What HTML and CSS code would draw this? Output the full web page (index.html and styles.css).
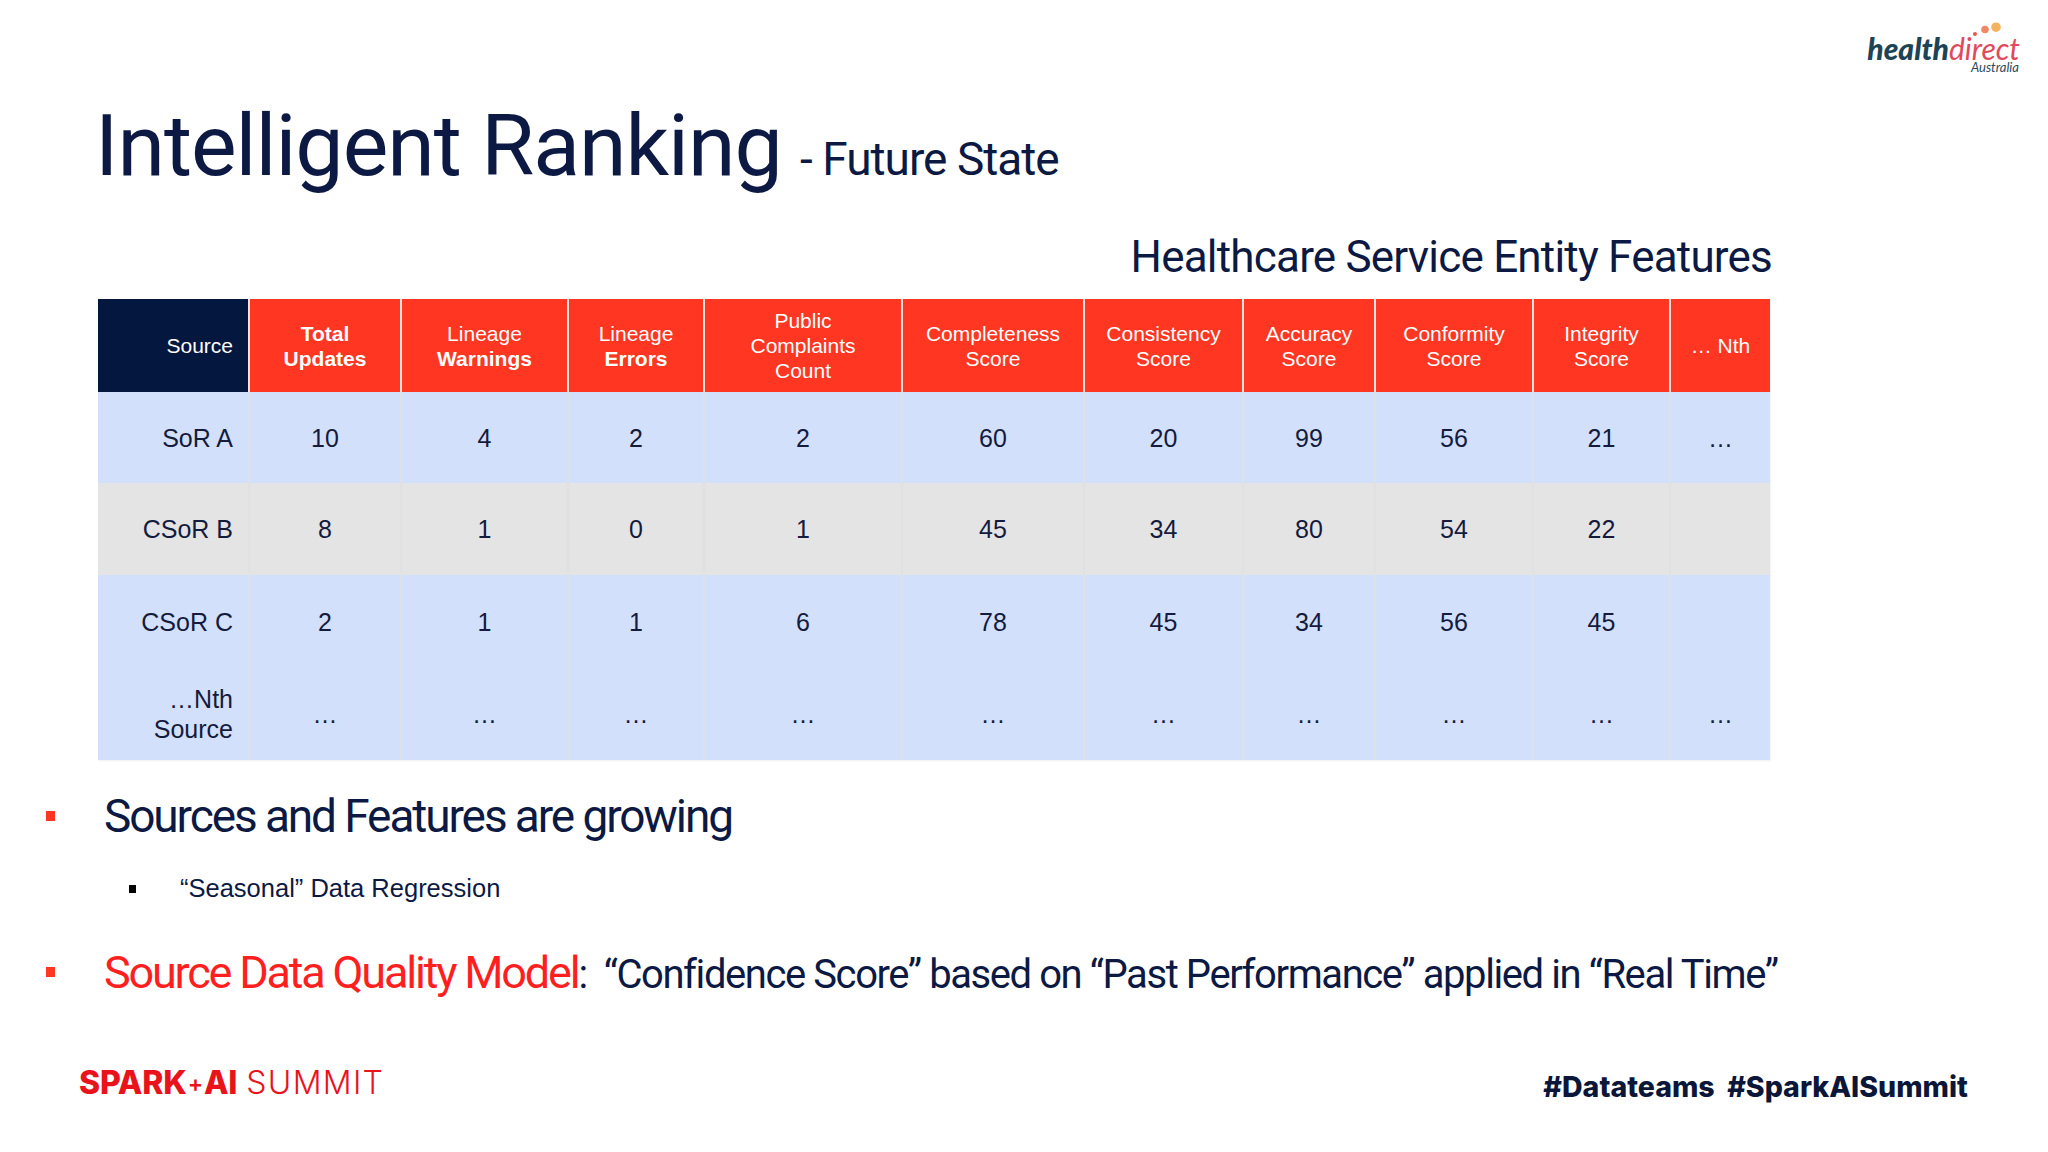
FILE: index.html
```html
<!DOCTYPE html>
<html lang="en">
<head>
<meta charset="utf-8">
<title>Intelligent Ranking - Future State</title>
<link rel="stylesheet" href="styles.css">
</head>
<body>
<div class="slide">
  <header class="top">
    <h1 class="title">Intelligent Ranking <span class="title-sub">- Future State</span></h1>
    <div class="hd-logo">
      <svg class="hd-dots" width="52" height="15" viewBox="0 0 52 15">
        <circle cx="7" cy="12" r="2" fill="#e4584a"/>
        <circle cx="17" cy="7.5" r="3.8" fill="#f08a66"/>
        <circle cx="28" cy="5.2" r="4.8" fill="#f3b35e"/>
      </svg>
      <div class="hd-word"><span class="hd-health">health</span><span class="hd-direct">direct</span></div>
      <div class="hd-aus">Australia</div>
    </div>
  </header>

  <div class="subtitle">Healthcare Service Entity Features</div>

  <div class="tbl">
    <div class="th th-src"><span>Source</span></div>
    <div class="th"><span><b>Total<br>Updates</b></span></div>
    <div class="th"><span>Lineage<br><b>Warnings</b></span></div>
    <div class="th"><span>Lineage<br><b>Errors</b></span></div>
    <div class="th"><span>Public<br>Complaints<br>Count</span></div>
    <div class="th"><span>Completeness<br>Score</span></div>
    <div class="th"><span>Consistency<br>Score</span></div>
    <div class="th"><span>Accuracy<br>Score</span></div>
    <div class="th"><span>Conformity<br>Score</span></div>
    <div class="th"><span>Integrity<br>Score</span></div>
    <div class="th"><span>… Nth</span></div>

    <div class="td td-src blue"><span>SoR A</span></div>
    <div class="td blue"><span>10</span></div>
    <div class="td blue"><span>4</span></div>
    <div class="td blue"><span>2</span></div>
    <div class="td blue"><span>2</span></div>
    <div class="td blue"><span>60</span></div>
    <div class="td blue"><span>20</span></div>
    <div class="td blue"><span>99</span></div>
    <div class="td blue"><span>56</span></div>
    <div class="td blue"><span>21</span></div>
    <div class="td blue"><span>…</span></div>

    <div class="td td-src grey"><span>CSoR B</span></div>
    <div class="td grey"><span>8</span></div>
    <div class="td grey"><span>1</span></div>
    <div class="td grey"><span>0</span></div>
    <div class="td grey"><span>1</span></div>
    <div class="td grey"><span>45</span></div>
    <div class="td grey"><span>34</span></div>
    <div class="td grey"><span>80</span></div>
    <div class="td grey"><span>54</span></div>
    <div class="td grey"><span>22</span></div>
    <div class="td grey"></div>

    <div class="td td-src blue"><span>CSoR C</span></div>
    <div class="td blue"><span>2</span></div>
    <div class="td blue"><span>1</span></div>
    <div class="td blue"><span>1</span></div>
    <div class="td blue"><span>6</span></div>
    <div class="td blue"><span>78</span></div>
    <div class="td blue"><span>45</span></div>
    <div class="td blue"><span>34</span></div>
    <div class="td blue"><span>56</span></div>
    <div class="td blue"><span>45</span></div>
    <div class="td blue"></div>

    <div class="td td-src blue"><span>…Nth<br>Source</span></div>
    <div class="td blue"><span>…</span></div>
    <div class="td blue"><span>…</span></div>
    <div class="td blue"><span>…</span></div>
    <div class="td blue"><span>…</span></div>
    <div class="td blue"><span>…</span></div>
    <div class="td blue"><span>…</span></div>
    <div class="td blue"><span>…</span></div>
    <div class="td blue"><span>…</span></div>
    <div class="td blue"><span>…</span></div>
    <div class="td blue"><span>…</span></div>
  </div>

  <ul class="bullets">
    <li class="b1"><span class="sq red"></span><span class="b1-text">Sources and Features are growing</span></li>
    <li class="b2"><span class="sq small"></span><span class="b2-text">“Seasonal” Data Regression</span></li>
    <li class="b1 b3"><span class="sq red"></span><span class="b1-text"><span class="hl">Source Data Quality Model</span><span class="rest">:&nbsp; “Confidence Score” based on “Past Performance” applied in “Real Time”</span></span></li>
  </ul>

  <footer class="foot">
    <div class="spark"><span class="spark-bold">SPARK<span class="plus">+</span>AI</span> <span class="spark-light">SUMMIT</span></div>
    <div class="tags">#Datateams&nbsp; #SparkAISummit</div>
  </footer>
</div>
</body>
</html>
```

FILE: styles.css
```css
* { box-sizing: border-box; }

html, body {
  margin: 0;
  padding: 0;
  background: #ffffff;
}

.slide {
  width: 2048px;
  height: 1152px;
  display: flex;
  flex-direction: column;
  background: #ffffff;
  font-family: "Roboto", "Liberation Sans", sans-serif;
  color: #0c1943;
  overflow: hidden;
}

/* ---------- header ---------- */
.top {
  display: flex;
  justify-content: space-between;
  align-items: flex-start;
  padding: 0 28px 0 95px;
}

.title {
  margin: 103px 0 0 0;
  font-size: 86px;
  line-height: 1;
  font-weight: 400;
  letter-spacing: -1px;
  color: #0c1943;
  white-space: nowrap;
}

.title-sub {
  font-size: 46px;
  letter-spacing: -1px;
  margin-left: -2px;
}

.hd-logo {
  margin-top: 22px;
  display: flex;
  flex-direction: column;
  align-items: flex-end;
}

.hd-dots {
  display: block;
  margin-bottom: -2px;
}

.hd-word {
  font-family: "Lato", "Open Sans", sans-serif;
  font-style: italic;
  font-size: 30px;
  line-height: 26px;
  white-space: nowrap;
}

.hd-health {
  font-weight: 900;
  color: #1d4356;
}

.hd-direct {
  font-weight: 400;
  color: #df4a5c;
}

.hd-aus {
  font-family: "Lato", "Open Sans", sans-serif;
  font-style: italic;
  font-size: 13px;
  line-height: 13px;
  color: #2a4a5c;
  margin-right: 1px;
}

/* ---------- subtitle ---------- */
.subtitle {
  margin: 46px 0 0 0;
  padding-right: 276px;
  text-align: right;
  font-size: 44px;
  line-height: 1;
  letter-spacing: -0.8px;
  color: #0c1943;
}

/* ---------- table ---------- */
.tbl {
  margin: 20px 0 0 98px;
  width: 1672px;
  display: grid;
  grid-template-columns: 150px 152px 167px 136px 198px 182px 159px 132px 158px 137px 101px;
  grid-template-rows: 93px 91px 92px 93px 92px;
  font-family: "Liberation Sans", Arial, sans-serif;
  box-shadow: 1px 1px 2px rgba(0, 0, 0, 0.06);
}

.th {
  background: #ff3621;
  color: #ffffff;
  font-size: 21px;
  line-height: 25px;
  display: flex;
  align-items: center;
  justify-content: center;
  text-align: center;
  border-left: 2px solid #fbe3df;
}

.th b { font-weight: 700; }

.th-src {
  background: #03173f;
  justify-content: flex-end;
  text-align: right;
  padding-right: 15px;
  border-left: none;
}

.td {
  font-size: 25px;
  line-height: 30px;
  color: #141b3d;
  display: flex;
  align-items: center;
  justify-content: center;
  text-align: center;
  border-left: 2px solid #dde1ea;
}

.td-src {
  justify-content: flex-end;
  text-align: right;
  padding-right: 15px;
  border-left: none;
}

.blue { background: #d2e0fb; }
.grey { background: #e4e4e5; border-left-color: #e1e1e3; }

/* ---------- bullets ---------- */
.bullets {
  list-style: none;
  margin: 33px 0 0 0;
  padding: 0;
}

.b1 {
  display: flex;
  align-items: center;
  font-size: 46px;
  line-height: 1;
  letter-spacing: -2.1px;
  color: #0c1943;
  white-space: nowrap;
}

.sq {
  display: block;
  flex: none;
}

.sq.red {
  width: 9px;
  height: 10px;
  background: #ff3621;
  margin: 0 49px 0 46px;
}

.b2 {
  display: flex;
  align-items: center;
  margin-top: 37px;
  font-family: "Liberation Sans", Arial, sans-serif;
  font-size: 25.5px;
  line-height: 1;
  color: #0c1943;
}

.sq.small {
  width: 7px;
  height: 8px;
  background: #000000;
  margin: 0 44px 0 129px;
}

.b3 {
  margin-top: 47px;
}

.hl {
  color: #ff1f1f;
  font-size: 45px;
  letter-spacing: -2.2px;
}

.rest {
  font-size: 40px;
  letter-spacing: -1.42px;
}

/* ---------- footer ---------- */
.foot {
  margin-top: auto;
  display: flex;
  justify-content: space-between;
  align-items: flex-end;
  padding: 0 80px 51px 79px;
}

.spark {
  font-family: "Inter", "Open Sans", sans-serif;
  font-size: 32px;
  line-height: 1;
  color: #e8131b;
  white-space: nowrap;
  margin-bottom: 2px;
}

.spark-bold {
  font-weight: 800;
  letter-spacing: -0.2px;
}

.plus {
  font-size: 23px;
  font-weight: 600;
  vertical-align: 2px;
  margin: 0 1px;
}

.spark-light {
  font-weight: 300;
  letter-spacing: 1.3px;
}

.tags {
  font-family: "Inter", "Open Sans", sans-serif;
  font-weight: 800;
  font-size: 28.5px;
  line-height: 1;
  color: #0b1638;
  white-space: nowrap;
}
```
